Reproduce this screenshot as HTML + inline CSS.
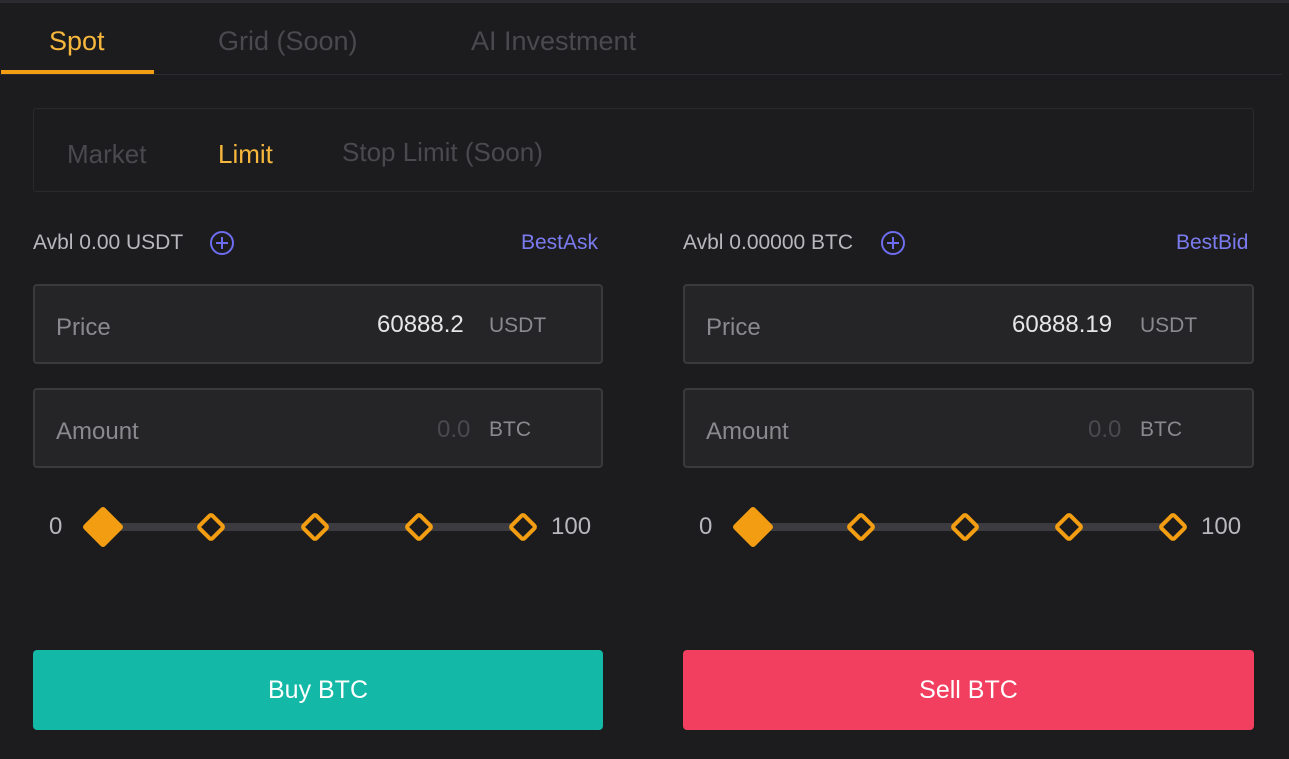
<!DOCTYPE html><html><head><style>
body{margin:0;width:1289px;height:759px;background:#1c1c1e;font-family:"Liberation Sans",sans-serif;position:relative;overflow:hidden}
.a{position:absolute;white-space:nowrap}
.box{position:absolute;background:#252528;border:2px solid #3a3a3d;border-radius:4px;box-sizing:border-box}
.lbl{font-size:24px;color:#8a8a8e}
.val{font-size:24px;color:#e6e6e8}
.unit{font-size:21px;color:#8a8a8e}
.btn{position:absolute;top:650px;height:80px;border-radius:4px;color:#fff;font-size:25px;display:flex;align-items:center;justify-content:center}
</style></head><body>
<div class="a" style="left:0;top:0;width:1289px;height:3px;background:#2b2b30"></div>
<div class="a" style="left:49px;top:26px;font-size:27px;color:#f6b73c">Spot</div>
<div class="a" style="left:218px;top:26px;font-size:27px;color:#4a4a4e">Grid (Soon)</div>
<div class="a" style="left:471px;top:26px;font-size:27px;color:#4a4a4e">AI Investment</div>
<div class="a" style="left:0;top:74px;width:1282px;height:1px;background:#2c2c30"></div>
<div class="a" style="left:1px;top:70px;width:153px;height:4px;background:#f29d12"></div>
<div class="a" style="left:33px;top:108px;width:1221px;height:84px;border:1px solid #2a2a2d;box-sizing:border-box;border-radius:3px"></div>
<div class="a" style="left:67px;top:139px;font-size:26px;color:#4a4a4e">Market</div>
<div class="a" style="left:218px;top:139px;font-size:26px;color:#f6b73c">Limit</div>
<div class="a" style="left:342px;top:137px;font-size:26px;color:#4a4a4e">Stop Limit (Soon)</div>

<div class="a" style="left:33px;top:231px;font-size:21px;color:#b8b8bc">Avbl 0.00 USDT</div>
<svg class="a" style="left:209px;top:230px" width="26" height="26"><circle cx="13" cy="13" r="11" fill="none" stroke="#6d6df0" stroke-width="2"/><path d="M13 7v12M7 13h12" stroke="#6d6df0" stroke-width="2"/></svg>
<div class="a" style="left:521px;top:231px;font-size:21px;color:#7b7bf0">BestAsk</div>
<div class="box" style="left:33px;top:284px;width:570px;height:80px"></div>
<div class="a lbl" style="left:56px;top:314px">Price</div>
<div class="a val" style="left:377px;top:311px">60888.2</div>
<div class="a unit" style="left:489px;top:314px">USDT</div>
<div class="box" style="left:33px;top:388px;width:570px;height:80px"></div>
<div class="a lbl" style="left:56px;top:418px">Amount</div>
<div class="a val" style="left:437px;top:416px;color:#4a4a4e">0.0</div>
<div class="a unit" style="left:489px;top:418px">BTC</div>
<div class="a" style="left:49px;top:513px;font-size:24px;color:#b8b8bc">0</div>
<div class="a" style="left:551px;top:513px;font-size:24px;color:#b8b8bc">100</div>
<svg class="a" style="left:80px;top:500px" width="470" height="54">
<rect x="23" y="23" width="420" height="8" fill="#3c3c40"/>
<rect x="8" y="12" width="30" height="30" rx="3" fill="#f29d12" transform="rotate(45 23 27)"/>
<g fill="#1c1c1e" stroke="#f29d12" stroke-width="4">
<rect x="122" y="18" width="18" height="18" rx="2" transform="rotate(45 131 27)"/>
<rect x="226" y="18" width="18" height="18" rx="2" transform="rotate(45 235 27)"/>
<rect x="330" y="18" width="18" height="18" rx="2" transform="rotate(45 339 27)"/>
<rect x="434" y="18" width="18" height="18" rx="2" transform="rotate(45 443 27)"/>
</g></svg>
<div class="btn" style="left:33px;width:570px;background:#13b8a6">Buy BTC</div>

<div class="a" style="left:683px;top:231px;font-size:21px;color:#b8b8bc">Avbl 0.00000 BTC</div>
<svg class="a" style="left:880px;top:230px" width="26" height="26"><circle cx="13" cy="13" r="11" fill="none" stroke="#6d6df0" stroke-width="2"/><path d="M13 7v12M7 13h12" stroke="#6d6df0" stroke-width="2"/></svg>
<div class="a" style="left:1176px;top:231px;font-size:21px;color:#7b7bf0">BestBid</div>
<div class="box" style="left:683px;top:284px;width:571px;height:80px"></div>
<div class="a lbl" style="left:706px;top:314px">Price</div>
<div class="a val" style="left:1012px;top:311px">60888.19</div>
<div class="a unit" style="left:1140px;top:314px">USDT</div>
<div class="box" style="left:683px;top:388px;width:571px;height:80px"></div>
<div class="a lbl" style="left:706px;top:418px">Amount</div>
<div class="a val" style="left:1088px;top:416px;color:#4a4a4e">0.0</div>
<div class="a unit" style="left:1140px;top:418px">BTC</div>
<div class="a" style="left:699px;top:513px;font-size:24px;color:#b8b8bc">0</div>
<div class="a" style="left:1201px;top:513px;font-size:24px;color:#b8b8bc">100</div>
<svg class="a" style="left:730px;top:500px" width="470" height="54">
<rect x="23" y="23" width="420" height="8" fill="#3c3c40"/>
<rect x="8" y="12" width="30" height="30" rx="3" fill="#f29d12" transform="rotate(45 23 27)"/>
<g fill="#1c1c1e" stroke="#f29d12" stroke-width="4">
<rect x="122" y="18" width="18" height="18" rx="2" transform="rotate(45 131 27)"/>
<rect x="226" y="18" width="18" height="18" rx="2" transform="rotate(45 235 27)"/>
<rect x="330" y="18" width="18" height="18" rx="2" transform="rotate(45 339 27)"/>
<rect x="434" y="18" width="18" height="18" rx="2" transform="rotate(45 443 27)"/>
</g></svg>
<div class="btn" style="left:683px;width:571px;background:#f23f5f">Sell BTC</div>
</body></html>
